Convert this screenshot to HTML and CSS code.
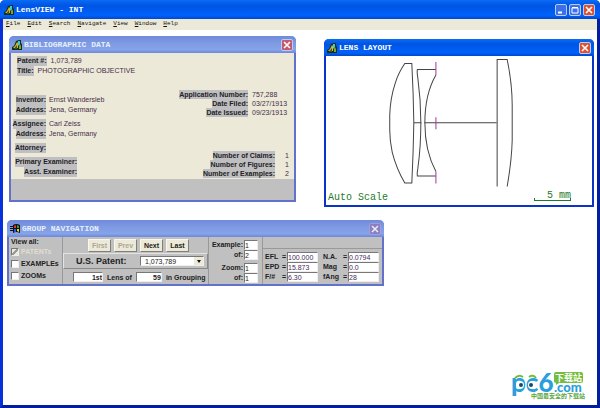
FILE: index.html
```html
<!DOCTYPE html>
<html lang="en">
  <head>
    <meta charset="UTF-8" />
    <meta name="viewport" content="width=device-width, initial-scale=1.0" />
    <title>LensVIEW - INT</title>
    <link rel="stylesheet" href="styles.css">
  </head>
  <body>
    <!-- shared icons -->
    <svg class="defs" width="0" height="0">
      <symbol id="lensIcon" viewBox="0 0 10 10">
        <path d="M0 10V7l2-1 2-5 3-1h2v3l1 1v6z" fill="#14301c" />
        <path d="M1 8l2-2 2-4 1 1v5H1z" fill="#c8bc30" />
        <path d="M2 9l3-4v4z" fill="#4c5018" />
        <path d="M6 1h2v3l-1 2-1-1z" fill="#40c8d8" />
        <path d="M7 6l1-2 1 2v3H7z" fill="#88a030" />
      </symbol>
      <symbol id="flagIcon" viewBox="0 0 10 10">
        <path d="M0 2h3v1H0zM0 4h3v1H0zM0 6h3v1H0zM3 1q3-2 7 0v8q-4-2-7 0z" fill="#111" />
        <path d="M4 2l2-1v3H4z" fill="#e03a20" />
        <path d="M7 1l2 1v2H7z" fill="#30a040" />
        <path d="M4 5h2v3L4 8z" fill="#2858d8" />
        <path d="M7 5h2v3L7 7z" fill="#e8d030" />
      </symbol>
      <symbol id="closeIcon" viewBox="0 0 10 10">
        <path d="M2 2l6 6M8 2L2 8" stroke="#fff" stroke-width="1.6" />
      </symbol>
    </svg>

    <div class="app">
      <header class="titlebar app-title">
        <svg class="title-icon"><use href="#lensIcon" /></svg>
        <h1>LensVIEW - INT</h1>
        <button class="win-btn" type="button" aria-label="Minimize">
          <svg viewBox="0 0 10 10"><path d="M2 7.5h4" stroke="#fff" stroke-width="2" /></svg>
        </button>
        <button class="win-btn" type="button" aria-label="Maximize">
          <svg viewBox="0 0 10 10"><path d="M2 3h6v5H2zM2 2.5h6" fill="none" stroke="#fff" /></svg>
        </button>
        <button class="win-btn close" type="button" aria-label="Close">
          <svg><use href="#closeIcon" /></svg>
        </button>
      </header>

      <nav class="menu">
        <a href="#"><u>F</u>ile</a>
        <a href="#"><u>E</u>dit</a>
        <a href="#"><u>S</u>earch</a>
        <a href="#"><u>N</u>avigate</a>
        <a href="#"><u>V</u>iew</a>
        <a href="#"><u>W</u>indow</a>
        <a href="#"><u>H</u>elp</a>
      </nav>

      <main class="workspace">
        <!-- Bibliographic data -->
        <section class="window inactive biblio">
          <header class="titlebar">
            <svg class="title-icon"><use href="#lensIcon" /></svg>
            <h2>BIBLIOGRAPHIC DATA</h2>
            <button class="win-btn close" type="button" aria-label="Close">
              <svg><use href="#closeIcon" /></svg>
            </button>
          </header>
          <div class="biblio-body">
            <div class="biblio-left">
              <dl class="top">
                <div><dt>Patent #:</dt><dd>1,073,789</dd></div>
                <div><dt>Title:</dt><dd>PHOTOGRAPHIC OBJECTIVE</dd></div>
              </dl>
              <dl class="people">
                <dt>Inventor:</dt><dd>Ernst Wandersleb</dd>
                <dt>Address:</dt><dd>Jena, Germany</dd>
              </dl>
              <dl class="people">
                <dt>Assignee:</dt><dd>Carl Zeiss</dd>
                <dt>Address:</dt><dd>Jena, Germany</dd>
              </dl>
              <dl class="people">
                <dt>Attorney:</dt><dd></dd>
              </dl>
              <dl class="people examiners">
                <dt>Primary Examiner:</dt><dd></dd>
                <dt>Asst. Examiner:</dt><dd></dd>
              </dl>
            </div>
            <div class="biblio-right">
              <dl class="dates">
                <dt>Application Number:</dt><dd>757,288</dd>
                <dt>Date Filed:</dt><dd>03/27/1913</dd>
                <dt>Date Issued:</dt><dd>09/23/1913</dd>
              </dl>
              <dl class="counts">
                <dt>Number of Claims:</dt><dd>1</dd>
                <dt>Number of Figures:</dt><dd>1</dd>
                <dt>Number of Examples:</dt><dd>2</dd>
              </dl>
            </div>
          </div>
          <div class="biblio-foot"></div>
        </section>

        <!-- Lens layout -->
        <section class="window lens">
          <header class="titlebar">
            <svg class="title-icon"><use href="#lensIcon" /></svg>
            <h2>LENS LAYOUT</h2>
            <button class="win-btn close" type="button" aria-label="Close">
              <svg><use href="#closeIcon" /></svg>
            </button>
          </header>
          <svg class="drawing" viewBox="326 56 265 134">
            <g fill="none" stroke="#444" stroke-width="1">
              <path d="M404.5 63.5h7Q413 92 413.500 122.500Q413 152 411.500 182.500h-7Q396 168 392 152Q389.500 140 389.500 130V115Q390 98 395 83Q398 73 404.500 63.500z" />
              <path d="M413.500 122.500H421M424 122.500H496" />
              <path d="M435.500 69.500H417Q416.500 72 417.500 78Q420.500 100 420.500 122.500Q420.500 146 417.500 168Q416.500 173 417 175.500H435.500" />
              <path d="M435.500 75Q424.500 94 424.500 122.500Q424.500 151 435.500 171" />
              <path d="M496.500 186V59.500H506.500Q511.500 84 511.500 105V140Q511 160 506.500 186" />
            </g>
            <path d="M435.500 62v13M435.500 117v12M435.500 171v12" stroke="#a03aa0" />
          </svg>
          <footer class="lens-foot">
            <span>Auto Scale</span>
            <span class="scale">5 mm</span>
          </footer>
        </section>

        <!-- Group navigation -->
        <section class="window inactive group">
          <header class="titlebar">
            <svg class="title-icon"><use href="#flagIcon" /></svg>
            <h2>GROUP NAVIGATION</h2>
            <button class="win-btn close dim" type="button" aria-label="Close" disabled>
              <svg><use href="#closeIcon" /></svg>
            </button>
          </header>
          <form class="group-body">
            <fieldset class="view-all">
              <legend>View all:</legend>
              <label class="off"><input type="checkbox" checked disabled />PATENTs</label>
              <label><input type="checkbox" />EXAMPLEs</label>
              <label><input type="checkbox" />ZOOMs</label>
            </fieldset>

            <div class="patent-nav">
              <div class="steps">
                <button type="button" disabled>First</button>
                <button type="button" disabled>Prev</button>
                <button type="button">Next</button>
                <button type="button">Last</button>
              </div>
              <div class="patent">
                <label for="patent">U.S. Patent:</label>
                <select id="patent">
                  <option>1,073,789</option>
                </select>
              </div>
              <div class="grouping">
                <input id="lensNo" value="1st" aria-label="Lens position" />
                <label for="lensCount">Lens of</label>
                <input id="lensCount" value="59" />
                <span>in Grouping</span>
              </div>
            </div>

            <div class="counter">
              <label for="example">Example:</label><input id="example" value="1" />
              <label for="exampleOf">of:</label><input id="exampleOf" value="2" />
              <label class="gap" for="zoom">Zoom:</label><input class="gap" id="zoom" value="1" />
              <label for="zoomOf">of:</label><input id="zoomOf" value="1" />
            </div>

            <div class="specs">
              <label for="efl">EFL</label><i>=</i><input id="efl" value="100.000" />
              <label class="second" for="na">N.A.</label><i>=</i><input id="na" value="0.0794" />
              <label for="epd">EPD</label><i>=</i><input id="epd" value="15.873" />
              <label class="second" for="mag">Mag</label><i>=</i><input id="mag" value="0.0" />
              <label for="fno">F/#</label><i>=</i><input id="fno" value="6.30" />
              <label class="second" for="fang">fAng</label><i>=</i><input id="fang" value="28" />
            </div>
          </form>
        </section>

        <!-- pc6 logo -->
        <svg class="logo" viewBox="0 0 76 34" lang="zh-CN">
          <text class="logo-blue" x="0" y="26" font-size="26">pc6</text>
          <text class="logo-blue" x="43" y="26" font-size="13">.com</text>
          <circle cx="9" cy="19" r="4" fill="#fff" />
          <circle cx="21" cy="19" r="4" fill="#fff" />
          <circle cx="10" cy="19" r="2" fill="#174a68" />
          <circle cx="20" cy="19" r="2" fill="#174a68" />
          <path d="M4 12q4-4 8-1M18 11q4-3 7 1" fill="none" stroke="#74bc3c" stroke-width="2" />
          <path d="M45 6h25q2 0 2 2v7q0 2-2 2H48l-3 2v-2q-2 0-2-2V8q0-2 2-2z" fill="#72bd3b" />
          <text class="logo-cn" x="44" y="15" font-size="9" fill="#fff">下载站</text>
          <text class="logo-cn" x="20" y="32" font-size="6" fill="#5aa540">中国最安全的下载站</text>
        </svg>
      </main>
    </div>
  </body>
</html>
```

FILE: styles.css
```css
* {
  box-sizing: border-box;
}

body {
  margin: 0;
  background-color: #fff;
  color: #222;
  font-family: "Liberation Sans", Arial, sans-serif;
  font-size: 7px;
  line-height: 9px;
}

button,
input,
select {
  font: inherit;
  color: inherit;
  margin: 0;
  padding: 0;
  border-radius: 0;
}

dl,
dd,
h1,
h2 {
  margin: 0;
}

.defs {
  position: absolute;
}

/* Main window */
.app {
  display: flex;
  flex-direction: column;
  min-height: 100vh;
  border: 3px solid #0831d9;
  border-top: 0;
  border-right-color: #001ea0;
  border-bottom-color: #001ea0;
  border-radius: 5px 5px 0 0;
}

.titlebar {
  display: flex;
  align-items: center;
  gap: 2px;
  height: 16px;
  padding: 0 2px;
  background: linear-gradient(#0a6cf5, #0054e3 30%, #0062fa 80%, #0048d0);
  color: #fff;
}

.titlebar h1,
.titlebar h2 {
  flex: 1;
  font-family: "Liberation Mono", monospace;
  font-size: 8px;
  font-weight: 700;
  line-height: 10px;
}

.app-title {
  height: 19px;
  margin: 0 -3px;
  padding: 0 5px 0 4px;
  border-radius: 5px 5px 0 0;
}

.title-icon {
  width: 10px;
  height: 10px;
}

.win-btn {
  width: 12px;
  height: 12px;
  border: 1px solid #b8ccf8;
  border-radius: 2px;
  background-color: #3b70ea;
}

.win-btn svg {
  display: block;
  width: 10px;
  height: 10px;
}

.win-btn.close {
  background-color: #dd5030;
}

/* Menu */
.menu {
  display: flex;
  gap: 7px;
  height: 11px;
  padding-left: 3px;
  background-color: #ece9d8;
  font-family: "Liberation Mono", monospace;
  font-size: 6px;
  line-height: 10px;
}

.menu a {
  color: #111;
  text-decoration: none;
}

.workspace {
  flex: 1;
  position: relative;
  background-color: #fff;
}

/* Child windows */
.window {
  position: absolute;
  border: 2px solid #0a34c8;
  border-top: 0;
  border-radius: 5px 5px 0 0;
  background-color: #fff;
}

.window .titlebar {
  height: 17px;
  margin: 0 -2px;
  padding: 0 3px;
  border-radius: 5px 5px 0 0;
}

.window.inactive {
  border-color: #6272cc;
}

.inactive .titlebar {
  background: linear-gradient(#6f8ade, #7a96df 30%, #86a4ea 80%, #6f86d8);
  color: #e8effc;
}

.inactive .win-btn.close {
  background-color: #c4586c;
}

.inactive .win-btn.dim {
  border-color: #a8a0d8;
  background-color: #9078b8;
  opacity: 0.8;
}

/* Bibliographic data */
.biblio {
  left: 6px;
  top: 6px;
  width: 287px;
}

.biblio-body {
  display: flex;
  justify-content: space-between;
  height: 126px;
  padding: 3px 5px 0 1px;
  background-color: #ece9d8;
}

.biblio dt {
  background-color: #bfbfc1;
  font-weight: 700;
}

.biblio dd {
  color: #452c4a;
}

.biblio-left {
  line-height: 10px;
}

.top {
  margin: 0 0 19px 5px;
}

.top div {
  display: flex;
  gap: 4px;
}

.people {
  display: grid;
  grid-template-columns: 34px auto;
  justify-items: start;
  column-gap: 3px;
  margin-bottom: 4px;
}

.people dt {
  justify-self: end;
}

.people.examiners {
  grid-template-columns: 65px auto;
}

.biblio-right {
  padding-top: 34px;
  text-align: right;
}

.dates,
.counts {
  display: grid;
  justify-items: end;
  column-gap: 4px;
}

.dates {
  grid-template-columns: 1fr 37px;
  margin-bottom: 34px;
}

.dates dd {
  justify-self: start;
}

.counts {
  grid-template-columns: 1fr 10px;
}

.biblio-foot {
  height: 21px;
  background-color: #c0c0c0;
}

/* Lens layout */
.lens {
  left: 321px;
  top: 9px;
  width: 270px;
}

.drawing {
  display: block;
  width: 100%;
}

.lens-foot {
  display: flex;
  justify-content: space-between;
  height: 14px;
  padding: 0 21px 0 2px;
  color: #1c7c28;
  font-family: "Liberation Mono", monospace;
  font-size: 10px;
  line-height: 14px;
}

/* scale bar with end ticks */
.scale {
  width: 37px;
  height: 10px;
  border-bottom: 1px solid #1c7c28;
  background:
    linear-gradient(#1c7c28, #1c7c28) left bottom / 1px 2px no-repeat,
    linear-gradient(#1c7c28, #1c7c28) right bottom / 1px 2px no-repeat;
  line-height: 9px;
  text-align: right;
}

/* Group navigation */
.group {
  left: 4px;
  top: 190px;
  width: 377px;
}

.group-body {
  display: grid;
  grid-template-columns: 53px 147px 54px 1fr;
  height: 47px;
  background-color: #c0c0c0;
  font-weight: 700;
}

.group-body input,
.group-body select {
  min-width: 0;
  height: 10px;
  border: 1px solid #777;
  border-right-color: #eee;
  border-bottom-color: #eee;
  background-color: #fff;
}

.view-all {
  display: flex;
  flex-direction: column;
  gap: 3px;
  margin: 0;
  padding: 0 0 0 2px;
  border: 0;
}

.view-all legend {
  padding: 0;
  line-height: 10px;
}

.view-all label {
  display: flex;
  align-items: center;
  gap: 2px;
}

.view-all label.off {
  color: #e0ddd0;
}

.group-body input[type="checkbox"] {
  appearance: none;
  width: 8px;
  height: 8px;
}

.group-body input[type="checkbox"]:checked {
  background: #ece9d8 linear-gradient(135deg, transparent 40%, #999 40% 60%, transparent 60%);
}

.patent-nav {
  display: flex;
  flex-direction: column;
  border: 1px solid #999;
  border-width: 0 1px;
}

.steps {
  display: flex;
  justify-content: center;
  gap: 3px;
  padding: 2px 0 1px 6px;
}

.steps button {
  width: 23px;
  height: 13px;
  border: 1px solid #f8f8f0;
  border-right-color: #808078;
  border-bottom-color: #808078;
  background-color: #ece9d8;
  font-weight: 700;
  line-height: 9px;
}

.steps button:disabled {
  color: #aaa798;
}

.patent {
  position: relative;
  display: flex;
  align-items: center;
  justify-content: space-between;
  height: 16px;
  padding: 0 3px 0 12px;
  border: 1px solid #e4e4e4;
  border-right-color: #888;
  border-bottom-color: #888;
  font-size: 9px;
}

.patent select {
  appearance: none;
  width: 64px;
  padding-left: 4px;
  background: #fff linear-gradient(#ece9d8, #ece9d8) right / 9px 9px no-repeat;
  font-size: 7px;
  font-weight: 400;
}

/* drop-down arrow */
.patent::after {
  content: "";
  position: absolute;
  right: 6px;
  top: 6px;
  border: 2px solid transparent;
  border-top: 3px solid #111;
  border-bottom: 0;
  pointer-events: none;
}

.grouping {
  display: flex;
  align-items: center;
  gap: 4px;
  padding: 3px 0 0 10px;
}

.grouping input {
  width: 30px;
  text-align: right;
}

.grouping label + input {
  width: 26px;
}

.counter {
  display: grid;
  grid-template-columns: 1fr 14px;
  grid-template-rows: 10px 10px 13px 10px;
  column-gap: 1px;
  padding: 3px 4px 0 0;
  border-right: 1px solid #999;
  text-align: right;
}

.counter input {
  font-weight: 400;
}

.counter .gap {
  margin-top: 3px;
}

.specs {
  display: grid;
  grid-template-columns: 17px 5px 31px 25px 5px 31px;
  grid-auto-rows: 10px;
  align-content: start;
  margin-top: 11px;
  padding: 3px 0 0 2px;
  border-top: 1px solid #999;
}

.specs input {
  color: #49285c;
  font-weight: 400;
}

.specs i {
  font-style: normal;
}

.specs .second {
  padding-left: 5px;
}

/* Logo */
.logo {
  position: absolute;
  right: 10px;
  bottom: 5px;
  width: 76px;
  height: 34px;
}

.logo-blue {
  fill: #2a9fdc;
  font-family: Lato, sans-serif;
  font-weight: 900;
}

.logo-cn {
  font-family: "Noto Sans CJK SC", sans-serif;
  font-weight: 700;
}
```
